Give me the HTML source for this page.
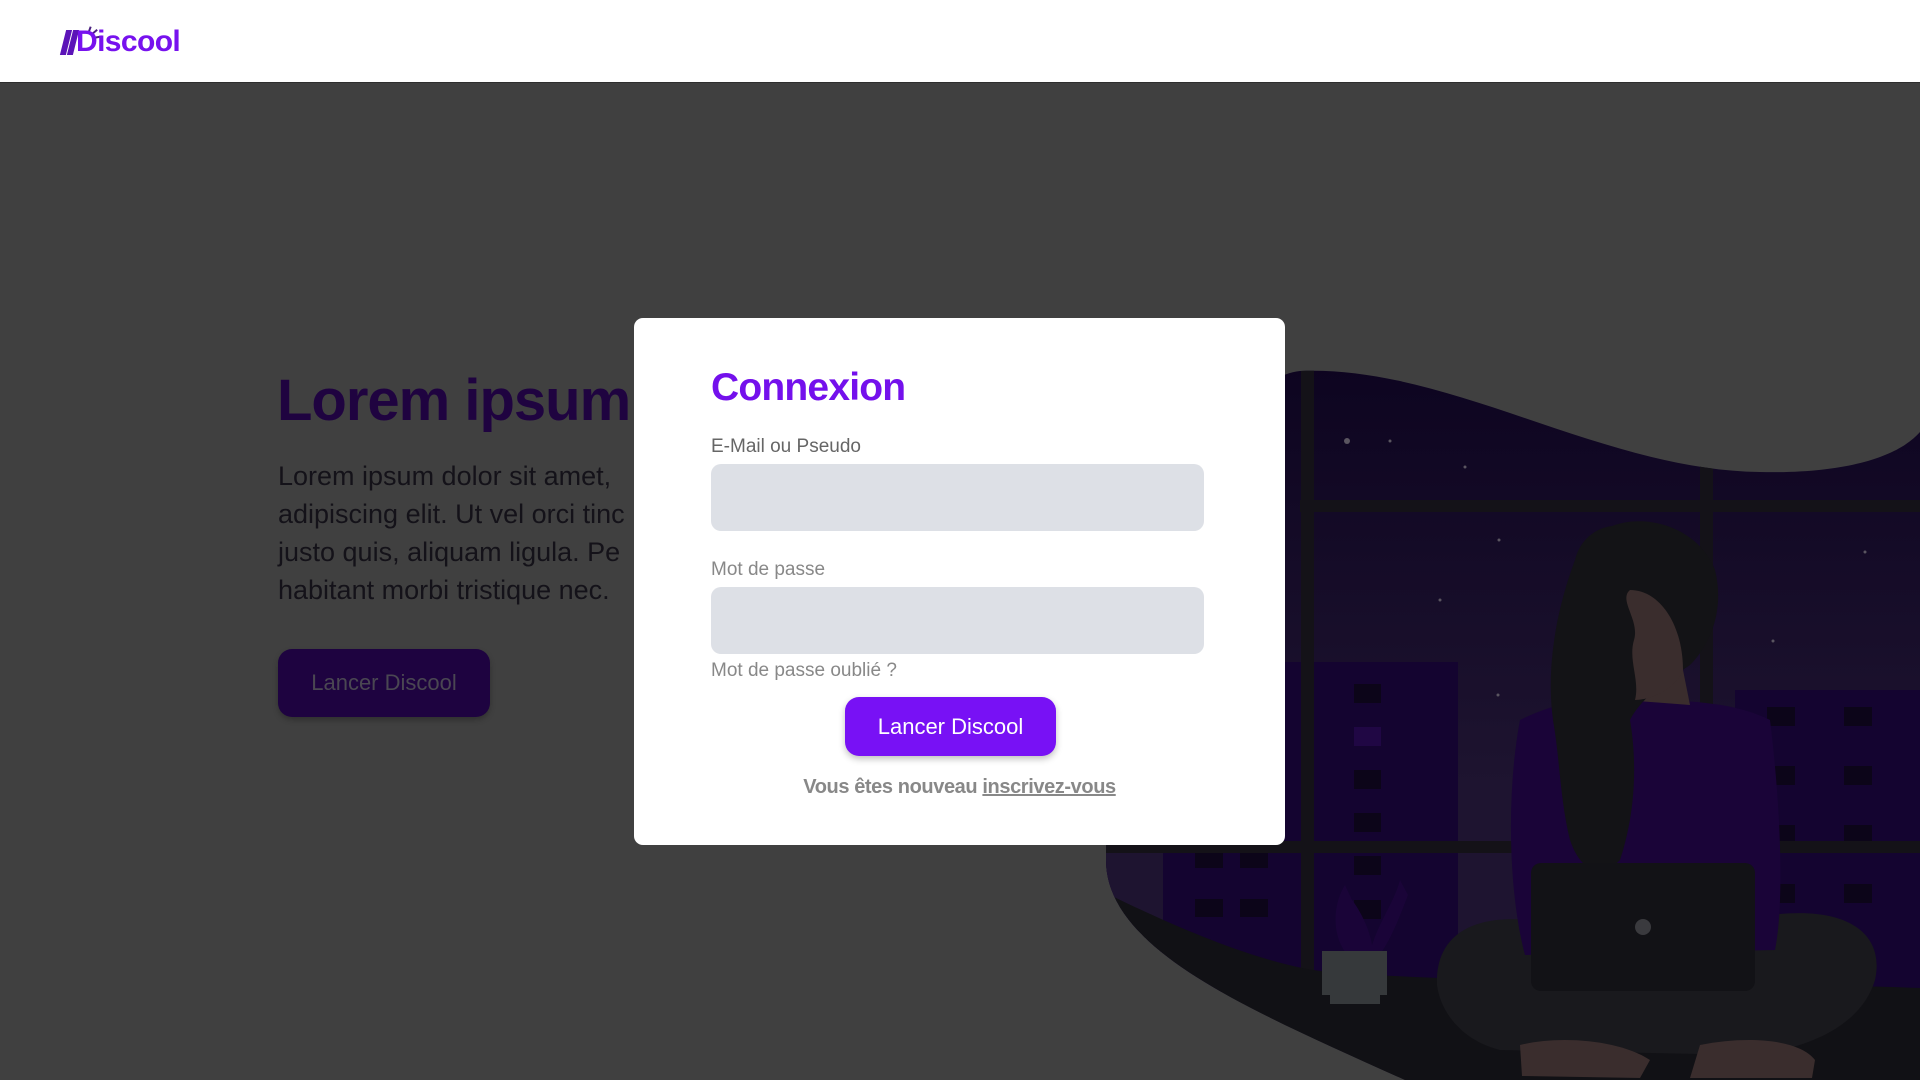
<!DOCTYPE html>
<html><head><meta charset="utf-8"><style>
*{margin:0;padding:0;box-sizing:border-box}
body{width:1920px;height:1080px;overflow:hidden;background:#404040;font-family:"Liberation Sans",sans-serif;position:relative}
.hdr{position:absolute;left:0;top:0;width:1920px;height:83px;background:#fff;border-bottom:1px solid #2e2e2e}
.ltxt{position:absolute;left:76px;top:25px;font-weight:bold;font-size:30px;color:#7712ee;letter-spacing:-0.6px}
.bars{position:absolute;top:30px;width:6px;height:25px;background:#5c14b8;transform:skewX(-14deg)}
.spark{position:absolute;height:2px;width:7px;background:#4a2080}
h1{position:absolute;left:277px;top:367px;font-size:58px;font-weight:bold;color:#1f0340;letter-spacing:-1px}
.para{position:absolute;left:278px;top:457px;width:400px;font-size:27px;line-height:38px;color:#141219;white-space:nowrap}
.lbtn{position:absolute;left:278px;top:649px;width:212px;height:68px;border-radius:14px;background:#1e0340;color:#4a4752;font-size:22px;text-align:center;line-height:68px;box-shadow:0 3px 6px rgba(0,0,0,.25)}
.modal{position:absolute;left:634px;top:318px;width:651px;height:527px;background:#fff;border-radius:9px}
.modal *{position:absolute}
.t{left:77px;top:48px;font-size:39px;font-weight:bold;color:#7410ec;letter-spacing:-0.8px}
.lab{left:77px;font-size:19px;color:#666}
.inp{left:77px;width:493px;height:67px;background:#dde0e6;border-radius:10px}
.btn{left:211px;top:379px;width:211px;height:59px;border-radius:14px;background:#7811f5;color:#fff;font-size:22px;text-align:center;line-height:59px;box-shadow:0 3px 7px rgba(0,0,0,.25)}
.bot{left:0;width:651px;top:458px;text-align:center;font-size:20px;font-weight:bold;color:#888;letter-spacing:-0.4px}
.bot u{position:static;font-weight:bold}
</style></head><body>
<div class="hdr">
 <div class="bars" style="left:63px"></div><div class="bars" style="left:70px"></div>
 <div class="spark" style="left:86px;top:29px;transform:rotate(-70deg)"></div>
 <div class="spark" style="left:91px;top:31px;transform:rotate(-40deg)"></div>
 <div class="spark" style="left:95px;top:36px;transform:rotate(-10deg)"></div>
 <div class="ltxt">Discool</div>
</div>
<h1>Lorem ipsum</h1>
<div class="para">Lorem ipsum dolor sit amet,<br>adipiscing elit. Ut vel orci tinc<br>justo quis, aliquam ligula. Pe<br>habitant morbi tristique nec.</div>
<div class="lbtn">Lancer Discool</div>
<svg style="position:absolute;left:0;top:0" width="1920" height="1080">
<defs>
<clipPath id="b"><path d="M1300,371 C1450,365 1600,470 1760,472 C1850,474 1900,455 1920,432 L1920,1080 L1405,1080 C1250,1010 1106,950 1106,860 C1106,700 1200,380 1300,371Z"/></clipPath>
<linearGradient id="sky" x1="0" y1="0" x2="0" y2="1"><stop offset="0" stop-color="#0d0420"/><stop offset="0.6" stop-color="#1e1430"/><stop offset="1" stop-color="#1e1430"/></linearGradient>
</defs>
<g clip-path="url(#b)">
<rect x="1100" y="360" width="820" height="720" fill="url(#sky)"/>
<g fill="#5a5560"><circle cx="1347" cy="441" r="3"/><circle cx="1390" cy="441" r="1.5"/><circle cx="1465" cy="467" r="1.5"/><circle cx="1499" cy="540" r="1.5"/><circle cx="1440" cy="600" r="1.5"/><circle cx="1865" cy="552" r="1.5"/><circle cx="1773" cy="641" r="1.5"/><circle cx="1498" cy="695" r="1.5"/></g>
<rect x="1106" y="662" width="352" height="330" fill="#140430"/>
<rect x="1106" y="840" width="57" height="150" fill="#1e1430"/>
<rect x="1735" y="690" width="185" height="300" fill="#140430"/>
<g fill="#0c0519">
<rect x="1354" y="684" width="27" height="19"/><rect x="1354" y="770" width="27" height="19"/><rect x="1354" y="813" width="27" height="19"/><rect x="1354" y="856" width="27" height="19"/><rect x="1354" y="900" width="27" height="19"/>
<rect x="1767" y="707" width="28" height="19"/><rect x="1844" y="707" width="28" height="19"/><rect x="1767" y="766" width="28" height="19"/><rect x="1844" y="766" width="28" height="19"/><rect x="1767" y="825" width="28" height="19"/><rect x="1844" y="825" width="28" height="19"/><rect x="1767" y="884" width="28" height="19"/><rect x="1844" y="884" width="28" height="19"/>
<rect x="1195" y="853" width="28" height="15"/><rect x="1240" y="853" width="28" height="15"/><rect x="1195" y="899" width="28" height="18"/><rect x="1240" y="899" width="28" height="18"/>
</g>
<rect x="1354" y="727" width="27" height="19" fill="#200744"/>
<g fill="#141218"><rect x="1301" y="360" width="13" height="620"/><rect x="1700" y="360" width="13" height="485"/><rect x="1300" y="500" width="620" height="12"/><rect x="1100" y="841" width="820" height="12"/></g>
<path d="M1100,890 C1200,940 1280,968 1330,972 C1500,985 1800,983 1920,988 L1920,1080 L1100,1080Z" fill="#111115"/>
<path d="M1345,952 C1330,930 1335,900 1345,885 L1352,900 C1360,910 1370,930 1372,945 C1380,920 1395,900 1400,880 L1408,895 C1395,930 1385,950 1375,960Z" fill="#1a0438"/>
<rect x="1322" y="951" width="65" height="44" fill="#36393b"/><rect x="1330" y="995" width="50" height="9" fill="#36393b"/>
<path d="M1437,985 C1435,930 1480,915 1530,920 L1770,915 C1850,905 1885,935 1875,980 C1860,1030 1800,1050 1750,1055 L1500,1050 C1460,1040 1440,1010 1437,985Z" fill="#19191d"/>
<path d="M1520,1045 C1560,1035 1620,1040 1650,1060 L1640,1078 L1522,1076Z M1700,1045 C1750,1035 1800,1040 1815,1060 L1812,1078 L1690,1078Z" fill="#3a2d2d"/>
<path d="M1520,720 C1560,700 1600,695 1640,700 C1700,700 1740,705 1770,720 C1780,800 1785,900 1775,950 L1525,955 C1510,900 1505,800 1520,720Z" fill="#1a0438"/>
<path d="M1625,700 L1622,670 L1683,670 L1690,705 Z" fill="#3a2d2d"/>
<path d="M1612,526 C1650,512 1700,530 1715,570 C1725,610 1710,645 1690,665 C1660,685 1640,700 1630,720 C1640,780 1630,830 1620,860 C1600,880 1580,870 1570,840 C1560,800 1560,760 1553,720 C1545,660 1560,600 1575,560 C1580,540 1595,528 1612,526Z" fill="#131316"/>
<path d="M1630,590 C1660,590 1683,625 1683,670 C1675,690 1650,700 1635,700 C1640,680 1628,660 1634,640 C1640,620 1618,600 1630,590Z" fill="#3a2d2d"/>
<rect x="1531" y="863" width="224" height="128" rx="10" fill="#121216"/>
<circle cx="1643" cy="927" r="8" fill="#3a3a3e"/>
</g>
</svg>
<div class="modal">
 <div class="t">Connexion</div>
 <div class="lab" style="top:118px">E-Mail ou Pseudo</div>
 <div class="inp" style="top:146px"></div>
 <div class="lab" style="top:241px;color:#888">Mot de passe</div>
 <div class="inp" style="top:269px"></div>
 <div class="lab" style="top:342px;color:#888">Mot de passe oublié ?</div>
 <div class="btn">Lancer Discool</div>
 <div class="bot">Vous êtes nouveau <u>inscrivez-vous</u></div>
</div>
</body></html>
